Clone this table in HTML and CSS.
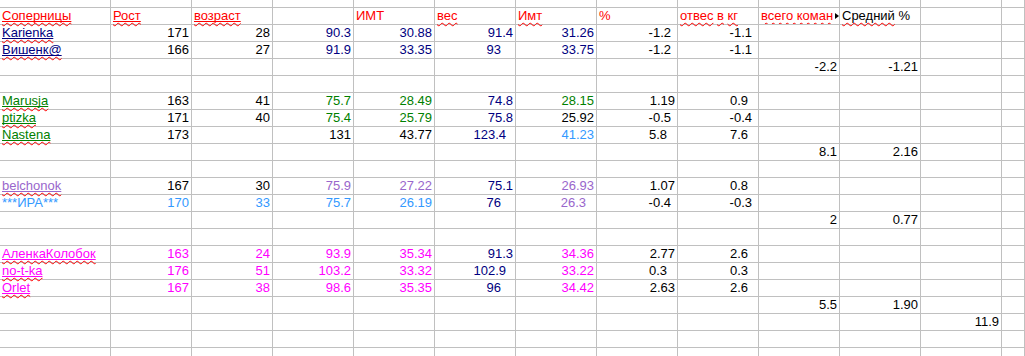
FILE: index.html
```html
<!DOCTYPE html>
<html lang="ru">
<head>
<meta charset="utf-8">
<title>Соперницы</title>
<link rel="stylesheet" href="styles.css">
</head>
<body>
<div class="sheet">
  <div class="row top"><div class="c"></div><div class="c"></div><div class="c"></div><div class="c"></div><div class="c"></div><div class="c"></div><div class="c"></div><div class="c"></div><div class="c"></div><div class="c"></div><div class="c"></div><div class="c"></div><div class="c"></div></div>

  <div class="row head">
    <div class="c t red"><span class="sp"><span class="ul">Соперницы</span></span></div>
    <div class="c t red"><span class="sp"><span class="ul">Рост</span></span></div>
    <div class="c t red"><span class="sp"><span class="ul">возраст</span></span></div>
    <div class="c t"></div>
    <div class="c t red">ИМТ</div>
    <div class="c t red"><span class="sp">вес</span></div>
    <div class="c t red"><span class="sp">Имт</span></div>
    <div class="c t red">%</div>
    <div class="c t red"><span class="sp">отвес</span> <span class="sp">в</span> <span class="sp">кг</span></div>
    <div class="c t red clip"><span class="sp">всего коман</span><span class="more"></span></div>
    <div class="c t blk"><span class="sp">Средний</span> %</div>
    <div class="c"></div>
    <div class="c"></div>
  </div>

  <div class="row">
    <div class="c t navy"><span class="sp"><span class="ul">Karienka</span></span></div>
    <div class="c n">171</div><div class="c n">28</div><div class="c n navy">90.3</div><div class="c n navy">30.88</div>
    <div class="c n navy">91.4</div><div class="c n navy">31.26</div><div class="c n neg7">-1.2</div><div class="c n neg8">-1.1</div>
    <div class="c"></div><div class="c"></div><div class="c"></div><div class="c"></div>
  </div>
  <div class="row">
    <div class="c t navy"><span class="sp"><span class="ul">Вишенк@</span></span></div>
    <div class="c n">166</div><div class="c n">27</div><div class="c n navy">91.9</div><div class="c n navy">33.35</div>
    <div class="c n navy w2">93</div><div class="c n navy">33.75</div><div class="c n neg7">-1.2</div><div class="c n neg8">-1.1</div>
    <div class="c"></div><div class="c"></div><div class="c"></div><div class="c"></div>
  </div>
  <div class="row">
    <div class="c"></div><div class="c"></div><div class="c"></div><div class="c"></div><div class="c"></div><div class="c"></div><div class="c"></div><div class="c"></div><div class="c"></div>
    <div class="c n">-2.2</div><div class="c n">-1.21</div><div class="c"></div><div class="c"></div>
  </div>
  <div class="row"><div class="c"></div><div class="c"></div><div class="c"></div><div class="c"></div><div class="c"></div><div class="c"></div><div class="c"></div><div class="c"></div><div class="c"></div><div class="c"></div><div class="c"></div><div class="c"></div><div class="c"></div></div>

  <div class="row">
    <div class="c t green"><span class="sp"><span class="ul">Marusja</span></span></div>
    <div class="c n">163</div><div class="c n">41</div><div class="c n green">75.7</div><div class="c n green">28.49</div>
    <div class="c n navy">74.8</div><div class="c n green">28.15</div><div class="c n">1.19</div><div class="c n pos8">0.9</div>
    <div class="c"></div><div class="c"></div><div class="c"></div><div class="c"></div>
  </div>
  <div class="row">
    <div class="c t green"><span class="sp"><span class="ul">ptizka</span></span></div>
    <div class="c n">171</div><div class="c n">40</div><div class="c n green">75.4</div><div class="c n green">25.79</div>
    <div class="c n navy">75.8</div><div class="c n">25.92</div><div class="c n neg7">-0.5</div><div class="c n neg8">-0.4</div>
    <div class="c"></div><div class="c"></div><div class="c"></div><div class="c"></div>
  </div>
  <div class="row">
    <div class="c t green"><span class="sp"><span class="ul">Nastena</span></span></div>
    <div class="c n">173</div><div class="c"></div><div class="c n">131</div><div class="c n">43.77</div>
    <div class="c n navy w3">123.4</div><div class="c n sky">41.23</div><div class="c n pos7">5.8</div><div class="c n pos8">7.6</div>
    <div class="c"></div><div class="c"></div><div class="c"></div><div class="c"></div>
  </div>
  <div class="row">
    <div class="c"></div><div class="c"></div><div class="c"></div><div class="c"></div><div class="c"></div><div class="c"></div><div class="c"></div><div class="c"></div><div class="c"></div>
    <div class="c n">8.1</div><div class="c n">2.16</div><div class="c"></div><div class="c"></div>
  </div>
  <div class="row"><div class="c"></div><div class="c"></div><div class="c"></div><div class="c"></div><div class="c"></div><div class="c"></div><div class="c"></div><div class="c"></div><div class="c"></div><div class="c"></div><div class="c"></div><div class="c"></div><div class="c"></div></div>

  <div class="row">
    <div class="c t purple"><span class="sp"><span class="ul">belchonok</span></span></div>
    <div class="c n">167</div><div class="c n">30</div><div class="c n purple">75.9</div><div class="c n purple">27.22</div>
    <div class="c n navy">75.1</div><div class="c n purple">26.93</div><div class="c n">1.07</div><div class="c n pos8">0.8</div>
    <div class="c"></div><div class="c"></div><div class="c"></div><div class="c"></div>
  </div>
  <div class="row">
    <div class="c t sky">***ИРА***</div>
    <div class="c n sky">170</div><div class="c n sky">33</div><div class="c n sky">75.7</div><div class="c n sky">26.19</div>
    <div class="c n navy w2">76</div><div class="c n purple pos7">26.3</div><div class="c n neg7">-0.4</div><div class="c n neg8">-0.3</div>
    <div class="c"></div><div class="c"></div><div class="c"></div><div class="c"></div>
  </div>
  <div class="row">
    <div class="c"></div><div class="c"></div><div class="c"></div><div class="c"></div><div class="c"></div><div class="c"></div><div class="c"></div><div class="c"></div><div class="c"></div>
    <div class="c n">2</div><div class="c n">0.77</div><div class="c"></div><div class="c"></div>
  </div>
  <div class="row"><div class="c"></div><div class="c"></div><div class="c"></div><div class="c"></div><div class="c"></div><div class="c"></div><div class="c"></div><div class="c"></div><div class="c"></div><div class="c"></div><div class="c"></div><div class="c"></div><div class="c"></div></div>

  <div class="row">
    <div class="c t pink"><span class="sp"><span class="ul">АленкаКолобок</span></span></div>
    <div class="c n pink">163</div><div class="c n pink">24</div><div class="c n pink">93.9</div><div class="c n pink">35.34</div>
    <div class="c n navy">91.3</div><div class="c n pink">34.36</div><div class="c n">2.77</div><div class="c n pos8">2.6</div>
    <div class="c"></div><div class="c"></div><div class="c"></div><div class="c"></div>
  </div>
  <div class="row">
    <div class="c t pink"><span class="sp"><span class="ul">no-t-ka</span></span></div>
    <div class="c n pink">176</div><div class="c n pink">51</div><div class="c n pink">103.2</div><div class="c n pink">33.32</div>
    <div class="c n navy w3">102.9</div><div class="c n pink">33.22</div><div class="c n pos7">0.3</div><div class="c n pos8">0.3</div>
    <div class="c"></div><div class="c"></div><div class="c"></div><div class="c"></div>
  </div>
  <div class="row">
    <div class="c t pink"><span class="sp"><span class="ul">Orlet</span></span></div>
    <div class="c n pink">167</div><div class="c n pink">38</div><div class="c n pink">98.6</div><div class="c n pink">35.35</div>
    <div class="c n navy w2">96</div><div class="c n pink">34.42</div><div class="c n">2.63</div><div class="c n pos8">2.6</div>
    <div class="c"></div><div class="c"></div><div class="c"></div><div class="c"></div>
  </div>
  <div class="row">
    <div class="c"></div><div class="c"></div><div class="c"></div><div class="c"></div><div class="c"></div><div class="c"></div><div class="c"></div><div class="c"></div><div class="c"></div>
    <div class="c n">5.5</div><div class="c n">1.90</div><div class="c"></div><div class="c"></div>
  </div>
  <div class="row">
    <div class="c"></div><div class="c"></div><div class="c"></div><div class="c"></div><div class="c"></div><div class="c"></div><div class="c"></div><div class="c"></div><div class="c"></div><div class="c"></div><div class="c"></div>
    <div class="c n">11.9</div><div class="c"></div>
  </div>
  <div class="row"><div class="c"></div><div class="c"></div><div class="c"></div><div class="c"></div><div class="c"></div><div class="c"></div><div class="c"></div><div class="c"></div><div class="c"></div><div class="c"></div><div class="c"></div><div class="c"></div><div class="c"></div></div>
  <div class="row bottom"><div class="c"></div><div class="c"></div><div class="c"></div><div class="c"></div><div class="c"></div><div class="c"></div><div class="c"></div><div class="c"></div><div class="c"></div><div class="c"></div><div class="c"></div><div class="c"></div><div class="c"></div></div>
</div>
</body>
</html>
```

FILE: styles.css
```css
html, body {
  margin: 0;
  padding: 0;
  background: #ffffff;
  overflow: hidden;
}

.sheet {
  width: 1025px;
  height: 356px;
  overflow: hidden;
  font-family: "Liberation Sans", Arial, sans-serif;
  font-size: 13px;
  color: #000000;
}

.row {
  display: grid;
  grid-template-columns: 111px repeat(11, 81px) 23px;
  height: 17px;
}

.row.top { height: 8px; }
.row.bottom { height: 9px; }

.c {
  box-sizing: border-box;
  border-right: 1px solid #c0c0c0;
  border-bottom: 1px solid #c0c0c0;
  line-height: 16px;
  white-space: nowrap;
  position: relative;
}

.row.bottom .c { border-bottom: none; }

.t { text-align: left; padding-left: 2px; }
.n { text-align: right; padding-right: 2px; }

.w2 { padding-right: 14px; }
.w3 { padding-right: 9px; }
.neg7 { padding-right: 6px; }
.pos7 { padding-right: 10px; }
.neg8 { padding-right: 6px; }
.pos8 { padding-right: 10px; }

.red { color: #ff0000; }
.blk { color: #000000; }
.navy { color: #000080; }
.green { color: #008000; }
.purple { color: #9966cc; }
.sky { color: #3399ff; }
.pink { color: #ff00ff; }

.sp {
  text-decoration-line: underline;
  text-decoration-style: wavy;
  text-decoration-color: #ff0000;
  text-decoration-thickness: 1px;
  text-underline-offset: 2px;
  text-decoration-skip-ink: none;
}

.ul {
  text-decoration-line: underline;
  text-decoration-style: solid;
  text-decoration-color: currentColor;
  text-underline-offset: 1px;
  text-decoration-thickness: 1px;
  text-decoration-skip-ink: none;
}

.clip {
  overflow: hidden;
  padding-right: 4px;
}

.more {
  position: absolute;
  right: 0;
  top: 5px;
  width: 0;
  height: 0;
  border-top: 3px solid transparent;
  border-bottom: 3px solid transparent;
  border-left: 4px solid #000000;
}
```
